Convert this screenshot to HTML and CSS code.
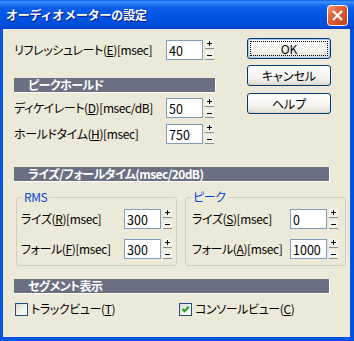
FILE: index.html
```html
<!DOCTYPE html>
<html lang="ja">
<head>
    <meta charset="UTF-8">
    <title>オーディオメーターの設定</title>
    <link rel="stylesheet" href="styles.css">
</head>
<body>
    <div class="window">
        <div class="titlebar">
            <span class="title">オーディオメーターの設定</span>
            <span class="close">
                <svg width="21" height="21" viewBox="0 0 21 21">
                    <defs>
                        <linearGradient id="cg" x1="0" y1="0" x2="1" y2="1">
                            <stop offset="0" stop-color="#f0a084"/>
                            <stop offset="0.35" stop-color="#e3643a"/>
                            <stop offset="1" stop-color="#c23c18"/>
                        </linearGradient>
                    </defs>
                    <rect x="0.5" y="0.5" width="20" height="20" rx="3" fill="url(#cg)" stroke="#fff"/>
                    <path d="M6 6l9 9M15 6l-9 9" stroke="#fff" stroke-width="2.2"/>
                </svg>
            </span>
        </div>

        <div class="client">
            <div class="top">
                <div class="main">
                    <div class="field">
                        <label>リフレッシュレート(<u>E</u>)[msec]</label>
                        <input class="num" type="text" value="40">
                        <span class="spin"><i class="up"></i><i class="down"></i></span>
                    </div>

                    <div class="section short">ピークホールド</div>

                    <div class="field first">
                        <label>ディケイレート(<u>D</u>)[msec/dB]</label>
                        <input class="num" type="text" value="50">
                        <span class="spin"><i class="up"></i><i class="down"></i></span>
                    </div>
                    <div class="field next">
                        <label>ホールドタイム(<u>H</u>)[msec]</label>
                        <input class="num" type="text" value="750">
                        <span class="spin"><i class="up"></i><i class="down"></i></span>
                    </div>
                </div>

                <div class="buttons">
                    <button class="btn default"><span>OK</span></button>
                    <button class="btn cancel"><span>キャンセル</span></button>
                    <button class="btn help"><span>ヘルプ</span></button>
                </div>
            </div>

            <div class="section wide rise">ライズ/フォールタイム(msec/20dB)</div>

            <div class="groups">
                <fieldset class="group rms">
                    <legend>RMS</legend>
                    <div class="field">
                        <label>ライズ(<u>R</u>)[msec]</label>
                        <input class="num" type="text" value="300">
                        <span class="spin"><i class="up"></i><i class="down"></i></span>
                    </div>
                    <div class="field next2">
                        <label>フォール(<u>F</u>)[msec]</label>
                        <input class="num" type="text" value="300">
                        <span class="spin"><i class="up"></i><i class="down"></i></span>
                    </div>
                </fieldset>

                <fieldset class="group peak">
                    <legend>ピーク</legend>
                    <div class="field">
                        <label>ライズ(<u>S</u>)[msec]</label>
                        <input class="num" type="text" value="0">
                        <span class="spin"><i class="up"></i><i class="down"></i></span>
                    </div>
                    <div class="field next2">
                        <label>フォール(<u>A</u>)[msec]</label>
                        <input class="num" type="text" value="1000">
                        <span class="spin"><i class="up"></i><i class="down"></i></span>
                    </div>
                </fieldset>
            </div>

            <div class="section wide segment">セグメント表示</div>

            <div class="checks">
                <label class="check track">
                    <span class="box"></span>
                    <span>トラックビュー(<u>T</u>)</span>
                </label>
                <label class="check">
                    <span class="box">
                        <svg width="11" height="11" viewBox="0 0 11 11">
                            <path d="M2.5 5l2 2.2 4.2-4.4" fill="none" stroke="#21a121" stroke-width="2.2"/>
                        </svg>
                    </span>
                    <span>コンソールビュー(<u>C</u>)</span>
                </label>
            </div>
        </div>
    </div>
</body>
</html>
```

FILE: styles.css
```css
* {
    box-sizing: border-box;
}
body {
    margin: 0;
    background: #0054e3;
    font-family: "Noto Sans CJK JP", sans-serif;
    font-size: 12px;
    line-height: 14px;
    font-feature-settings: "palt";
    letter-spacing: -0.4px;
    color: #000;
}
.window {
    width: 354px;
    height: 341px;
    display: flex;
    flex-direction: column;
    background: linear-gradient(to right, #0831d9, #166aee 1px, #0055e5 2px, #0054e3);
}
.titlebar {
    height: 29px;
    flex: none;
    display: flex;
    align-items: center;
    padding: 0 6px;
    background: linear-gradient(to bottom, #0a5fe6 0, #3d93ff 2px, #2478f5 4px, #0a5de8 8px, #0055e5 16px, #004fdc 24px, #0042cf 29px);
}
.title {
    flex: 1;
    color: #fff;
    font-weight: bold;
    font-size: 12px;
    font-feature-settings: normal;
    letter-spacing: -0.2px;
    text-shadow: 1px 1px #0a1883;
    padding-top: 1px;
}
.close {
    display: flex;
    width: 21px;
    height: 21px;
    margin-top: 2px;
}
.client {
    flex: 1;
    margin: 0 4px 4px 3px;
    background: #ece9d8;
    padding: 9px 0 0 11px;
}
.top {
    display: flex;
    align-items: flex-start;
}
.main {
    width: 202px;
    padding-top: 2px;
}
.field {
    display: flex;
    align-items: center;
    height: 20px;
}
.field label {
    white-space: nowrap;
}
.main .field label {
    width: 152px;
}
.field.first {
    margin-top: 5px;
}
.field.next {
    margin-top: 6px;
}
.num {
    width: 37px;
    height: 20px;
    margin: 0;
    border: 1px solid #7f9db9;
    padding: 0 2px;
    background: #fff;
    font: inherit;
    font-size: 12.5px;
    letter-spacing: 0;
    color: #000;
    outline: none;
}
.spin {
    display: flex;
    flex-direction: column;
    justify-content: space-between;
    height: 20px;
    margin-left: 2px;
}
.spin i {
    display: block;
    width: 9px;
    height: 9px;
    border-bottom: 1px solid #8c8c84;
    background-color: #f3f2ec;
    background-repeat: no-repeat;
}
.spin .up {
    background-image: linear-gradient(#000, #000), linear-gradient(#000, #000);
    background-size: 5px 1px, 1px 5px;
    background-position: 2px 3px, 4px 1px;
}
.spin .down {
    background-image: linear-gradient(#000, #000);
    background-size: 5px 1px;
    background-position: 2px 4px;
}
.section {
    height: 15px;
    background: #6a7082;
    border-right: 1px solid #fff;
    border-bottom: 1px solid #fff;
    color: #fff;
    font-weight: bold;
    padding-left: 14px;
    line-height: 14px;
    letter-spacing: -0.6px;
    white-space: nowrap;
}
.section.short {
    margin-top: 18px;
}
.section.wide {
    width: 316px;
}
.section.rise {
    margin-top: 23px;
}
.section.segment {
    margin-top: 13px;
}
.buttons {
    margin-left: 31px;
    display: flex;
    flex-direction: column;
}
.btn {
    display: flex;
    width: 84px;
    height: 21px;
    margin: 0;
    padding: 0;
    border: 1px solid #003c74;
    border-radius: 3px;
    background: linear-gradient(to bottom, #fff, #f4f3ee 60%, #e6e3d8 90%, #d6d0c5);
    font: inherit;
    color: #000;
}
.btn span {
    flex: 1;
    display: flex;
    align-items: center;
    justify-content: center;
    margin: 2px;
    border: 1px dotted transparent;
}
.btn.default {
    box-shadow: inset 0 0 0 1px #a9c4ee;
}
.btn.default span {
    border-color: #000;
}
.btn.cancel {
    margin-top: 6px;
}
.btn.help {
    margin-top: 7px;
}
.groups {
    display: flex;
    margin-top: 8px;
    padding-left: 2px;
}
.group {
    width: 161px;
    height: 76px;
    margin: 0;
    padding: 0 0 0 4px;
    border: 1px solid #d0d0bf;
    border-radius: 3px;
}
.group.peak {
    margin-left: 8px;
    padding-left: 6px;
}
.group legend {
    color: #0046d5;
    padding: 0 2px;
    margin-left: 1px;
    line-height: 14px;
}
.group.peak legend {
    margin-left: -1px;
}
.group .field {
    margin-top: 5px;
}
.group .field.next2 {
    margin-top: 10px;
}
.rms .field label {
    width: 103px;
}
.peak .field label {
    width: 98px;
}
.checks {
    display: flex;
    margin-top: 8px;
    padding-left: 1px;
}
.check {
    display: flex;
    align-items: center;
    gap: 3px;
    height: 14px;
}
.check.track {
    width: 164px;
}
.box {
    display: flex;
    align-items: center;
    justify-content: center;
    width: 13px;
    height: 13px;
    border: 1px solid #1c5180;
    background: linear-gradient(135deg, #dcdcd7, #f6f6f3 70%, #fff);
}
```
